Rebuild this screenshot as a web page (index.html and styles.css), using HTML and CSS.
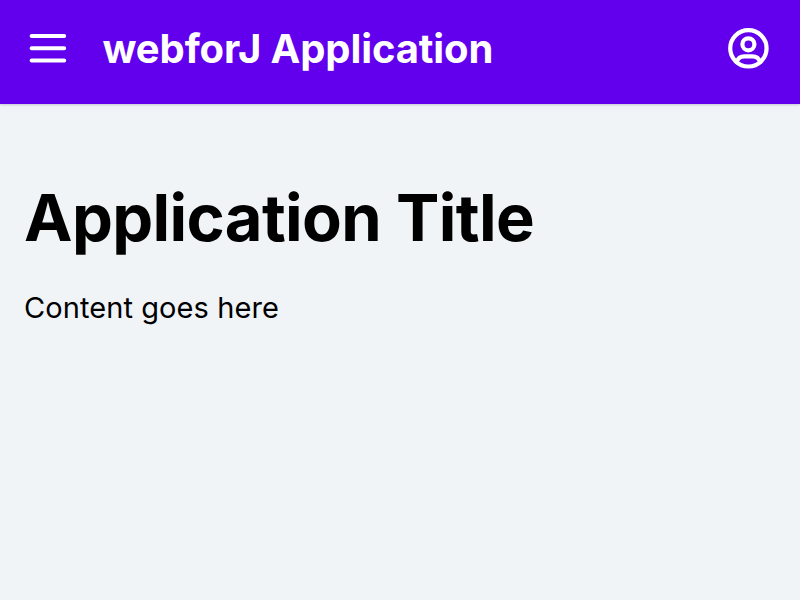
FILE: index.html
```html
<!DOCTYPE html>
<html lang="en">
<head>
<meta charset="utf-8">
<title>webforJ Application</title>
<link rel="stylesheet" href="styles.css">
</head>
<body>
<header class="toolbar">
  <svg class="menu-icon" viewBox="0 0 48 48"><path d="M7.6 12h32.6M7.6 24.2h32.6M7.6 36.4h32.6"/></svg>
  <div class="toolbar-title">webforJ Application</div>
  <svg class="user-icon" viewBox="-0.2 -0.15 24 24"><circle cx="12" cy="12" r="9.1"/><circle cx="12" cy="10" r="3"/><path d="M6.168 18.849a4 4 0 0 1 3.832 -2.849h4a4 4 0 0 1 3.834 2.855"/></svg>
</header>
<main class="content">
  <h1 class="heading">Application Title</h1>
  <p class="text">Content goes here</p>
</main>
</body>
</html>
```
FILE: styles.css
```css
body {
  margin: 0;
  min-height: 100vh;
  background: #f0f4f7;
  color: #000;
  font-family: Inter, "Liberation Sans", sans-serif;
}
.toolbar {
  box-sizing: border-box;
  height: 104px;
  display: flex;
  align-items: center;
  padding: 0 28px 8px 24px;
  background: #6200ee;
  box-shadow: 0 1px 2px rgba(40, 50, 90, 0.22);
  color: #fff;
}
.menu-icon, .user-icon {
  width: 48px;
  height: 48px;
  fill: none;
  stroke: #fff;
  stroke-linecap: round;
  stroke-linejoin: round;
}
.menu-icon { stroke-width: 4; }
.user-icon { stroke-width: 2.1; margin-left: auto; }
.toolbar-title {
  margin-left: 30.5px;
  padding-top: 2px;
  font-size: 40px;
  font-weight: 700;
  line-height: 48px;
  letter-spacing: -0.12px;
  white-space: nowrap;
}
.content { padding: 75px 24px 0; }
.heading {
  margin: 0;
  font-size: 65px;
  font-weight: 700;
  line-height: 77px;
  letter-spacing: -0.63px;
  white-space: nowrap;
}
.text {
  margin: 29px 0 0;
  font-size: 29px;
  line-height: 45px;
  letter-spacing: 0.08px;
}
```
